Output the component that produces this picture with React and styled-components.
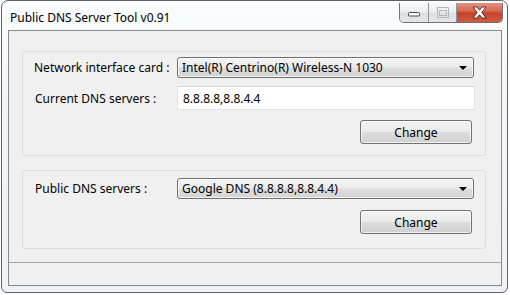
import React from 'react';
import styled, { createGlobalStyle } from 'styled-components';

const GlobalStyle = createGlobalStyle`
  html, body {
    margin: 0;
    padding: 0;
    background: #ffffff;
  }
  body {
    font-family: "Noto Sans", "Open Sans", "DejaVu Sans", sans-serif;
    font-size: 12px;
    color: #000;
  }
`

const Page = styled.div`
  width: 510px;
  height: 295px;
  padding: 0 0 0 1px;
  box-sizing: border-box;
`

const Window = styled.div`
  width: 507px;
  height: 293px;
  box-sizing: border-box;
  border: 1px solid #5f6366;
  border-radius: 7px 7px 6px 6px;
  background: linear-gradient(180deg, #fbfcfd 0%, #f1f4f8 40%, #eef1f5 100%);
  display: flex;
  flex-direction: column;
  padding: 0 5px 6px 6px;
`

const TitleBar = styled.div`
  height: 30px;
  display: flex;
  align-items: flex-start;
  justify-content: space-between;
`

const Title = styled.span`
  padding: 9px 0 0 2px;
  font-size: 12px;
  line-height: 16px;
  color: #000;
`

const CaptionGroup = styled.div`
  display: flex;
  margin-top: 2px;
  margin-right: -1px;
  height: 19px;
  border: 1px solid #6f7378;
  border-top: none;
  border-radius: 0 0 5px 5px;
  overflow: hidden;
`

const CaptionButton = styled.div`
  width: ${p => p.$w}px;
  height: 100%;
  display: flex;
  align-items: center;
  justify-content: center;
  box-sizing: border-box;
  border-left: ${p => (p.$first ? 'none' : '1px solid #8e9297')};
  background: ${p =>
    p.$close
      ? 'linear-gradient(180deg, #e39282 0%, #d86a53 40%, #c6432b 55%, #cf5a41 100%)'
      : 'linear-gradient(180deg, #f7f8f9 0%, #eceef0 45%, #dde0e3 55%, #e4e6e8 100%)'};
`

const Client = styled.div`
  flex: 1;
  border: 1px solid #858a90;
  background: #f0f0f0;
  display: flex;
  flex-direction: column;
`

const Content = styled.div`
  flex: 1;
  padding: 20px 15px 0 13px;
  display: flex;
  flex-direction: column;
  gap: 14px;
`

const GroupBox = styled.div`
  border: 1px solid #d5dfe5;
  border-radius: 3px;
  height: ${p => p.$h}px;
  box-sizing: border-box;
  padding: ${p => p.$pt}px 11px 0 11px;
  display: grid;
  grid-template-columns: 143px 1fr;
  align-content: start;
  row-gap: ${p => p.$gap}px;
`

const Label = styled.label`
  display: flex;
  align-items: center;
  padding-left: ${p => p.$indent || 0}px;
  white-space: nowrap;
`

const Combo = styled.div`
  height: 21px;
  box-sizing: border-box;
  border: 1px solid #707070;
  border-radius: 3px;
  background: linear-gradient(180deg, #f3f3f3 0%, #ececec 48%, #dedede 52%, #d3d3d3 100%);
  box-shadow: inset 0 0 0 1px rgba(255, 255, 255, 0.7);
  display: flex;
  align-items: center;
  justify-content: space-between;
  padding: 0 6px 0 4px;
`

const Arrow = styled.span`
  width: 0;
  height: 0;
  border-left: 4px solid transparent;
  border-right: 4px solid transparent;
  border-top: 4px solid #000;
  margin-top: 1px;
`

const TextBox = styled.div`
  height: 24px;
  margin-right: -1px;
  box-sizing: border-box;
  border: 1px solid #e2e3ea;
  border-top-color: #d7d8de;
  background: #ffffff;
  display: flex;
  align-items: center;
  padding: 0 5px;
`

const ButtonRow = styled.div`
  grid-column: 1 / span 2;
  display: flex;
  justify-content: flex-end;
  padding-right: 2px;
  margin-top: ${p => p.$mt || 0}px;
`

const Button = styled.button`
  width: 112px;
  height: 24px;
  box-sizing: border-box;
  border: 1px solid #707070;
  border-radius: 3px;
  background: linear-gradient(180deg, #f2f2f2 0%, #ebebeb 48%, #dddddd 52%, #cfcfcf 100%);
  box-shadow: inset 0 0 0 1px rgba(255, 255, 255, 0.75);
  font-family: inherit;
  font-size: 12px;
  color: #000;
  padding: 0;
`

const StatusBar = styled.div`
  height: 22px;
  border-top: 1px solid #a5a5a5;
  margin-top: 13px;
`

const App = () => {
  return (
    <Page>
      <GlobalStyle />
      <Window>
        <TitleBar>
          <Title>Public DNS Server Tool v0.91</Title>
          <CaptionGroup>
            <CaptionButton $w={28} $first>
              <svg width="14" height="8" viewBox="0 0 14 8">
                <rect x="1.5" y="3.5" width="11" height="3.5" rx="1" fill="#fff" stroke="#3c4a5c" />
              </svg>
            </CaptionButton>
            <CaptionButton $w={28}>
              <svg width="12" height="11" viewBox="0 0 12 11">
                <rect x="0.5" y="0.5" width="11" height="10" fill="none" stroke="#b4b8bd" />
                <rect x="2.5" y="3.5" width="7" height="5" fill="none" stroke="#b4b8bd" />
              </svg>
            </CaptionButton>
            <CaptionButton $w={46} $close>
              <svg width="17" height="13" viewBox="0 0 17 13">
                <path d="M2 1 L6 1 L8.5 4.2 L11 1 L15 1 L10.8 6.5 L15 12 L11 12 L8.5 8.8 L6 12 L2 12 L6.2 6.5 Z"
                  fill="#ffffff" stroke="#4f2119" strokeWidth="0.9" strokeLinejoin="round" />
              </svg>
            </CaptionButton>
          </CaptionGroup>
        </TitleBar>
        <Client>
          <Content>
            <GroupBox $h={105} $pt={5} $gap={8}>
              <Label>Network interface card :</Label>
              <Combo>
                <span>Intel(R) Centrino(R) Wireless-N 1030</span>
                <Arrow />
              </Combo>
              <Label $indent={1}>Current DNS servers :</Label>
              <TextBox>8.8.8.8,8.8.4.4</TextBox>
              <ButtonRow $mt={2}>
                <Button>Change</Button>
              </ButtonRow>
            </GroupBox>
            <GroupBox $h={79} $pt={7} $gap={11}>
              <Label $indent={1}>Public DNS servers :</Label>
              <Combo>
                <span>Google DNS (8.8.8.8,8.8.4.4)</span>
                <Arrow />
              </Combo>
              <ButtonRow>
                <Button>Change</Button>
              </ButtonRow>
            </GroupBox>
          </Content>
          <StatusBar />
        </Client>
      </Window>
    </Page>
  );
}

export default App;
